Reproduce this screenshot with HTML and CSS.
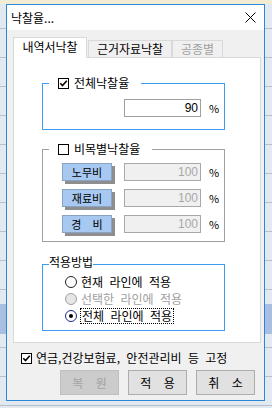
FILE: index.html
```html
<!DOCTYPE html>
<html lang="ko">
<head>
    <meta charset="UTF-8">
    <meta name="viewport" content="width=device-width, initial-scale=1.0">
    <title>낙찰율</title>
    <link rel="stylesheet" href="styles.css">
</head>
<body>
    <div class="dialog">
        <div class="titlebar">
            <span class="title">낙찰율...</span>
            <svg class="close-icon" width="11" height="11" viewBox="0 0 11 11">
                <path d="M0.5 0.5L10.5 10.5M10.5 0.5L0.5 10.5" stroke="#000" stroke-width="1" fill="none"/>
            </svg>
        </div>

        <div class="dialog-body">
            <div class="tabs">
                <div class="tab tab-active">내역서낙찰</div>
                <div class="tab tab-second">근거자료낙찰</div>
                <div class="tab tab-disabled">공종별</div>
            </div>

            <div class="tab-panel">
                <fieldset class="group group-blue">
                    <legend class="check-legend">
                        <span class="check-label">
                            <span class="checkbox">
                                <svg width="9" height="9" viewBox="0 0 9 9"><path d="M1.3 4.2L3.5 6.6L7.8 1.8" stroke="#000" stroke-width="1.6" fill="none"/></svg>
                            </span>전체낙찰율
                        </span>
                    </legend>
                    <div class="group-content total-content">
                        <span class="field field-edit">90</span>
                        <span class="unit">%</span>
                    </div>
                </fieldset>

                <fieldset class="group group-gray">
                    <legend class="check-legend">
                        <span class="check-label">
                            <span class="checkbox"></span>비목별낙찰율
                        </span>
                    </legend>
                    <div class="group-content item-content">
                        <div class="item-row">
                            <span class="item-button">노무비</span>
                            <span class="field field-disabled">100</span>
                            <span class="unit">%</span>
                        </div>
                        <div class="item-row">
                            <span class="item-button">재료비</span>
                            <span class="field field-disabled">100</span>
                            <span class="unit">%</span>
                        </div>
                        <div class="item-row">
                            <span class="item-button item-button-wide">경 비</span>
                            <span class="field field-disabled">100</span>
                            <span class="unit">%</span>
                        </div>
                    </div>
                </fieldset>

                <fieldset class="group group-blue group-method">
                    <legend class="text-legend">적용방법</legend>
                    <div class="group-content method-content">
                        <div class="radio-row">
                            <span class="radio"></span>
                            <span class="radio-text">현재 라인에 적용</span>
                        </div>
                        <div class="radio-row radio-row-disabled">
                            <span class="radio radio-disabled"></span>
                            <span class="radio-text">선택한 라인에 적용</span>
                        </div>
                        <div class="radio-row">
                            <span class="radio radio-checked"></span>
                            <span class="radio-text radio-focus">전체 라인에 적용</span>
                        </div>
                    </div>
                </fieldset>
            </div>

            <div class="fixed-row">
                <span class="checkbox">
                    <svg width="9" height="9" viewBox="0 0 9 9"><path d="M1.3 4.2L3.5 6.6L7.8 1.8" stroke="#000" stroke-width="1.6" fill="none"/></svg>
                </span>
                <span class="fixed-text">연금,건강보험료, 안전관리비 등 고정</span>
            </div>

            <div class="dialog-buttons">
                <button class="dlg-button" disabled>복 원</button>
                <button class="dlg-button">적 용</button>
                <button class="dlg-button">취 소</button>
            </div>
        </div>
    </div>
</body>
</html>
```

FILE: styles.css
```css
body {
    margin: 0;
    height: 408px;
    overflow: hidden;
    font-family: "Noto Sans CJK KR", "Noto Sans", sans-serif;
    font-size: 12px;
    line-height: 14px;
    color: #000;
    background-color: #e3e9f0;
    background-image:
        linear-gradient(to bottom, #f2ecd2 0, #f2ecd2 4px, transparent 4px),
        linear-gradient(to bottom, transparent 304px, #a9bfe2 304px, #a9bfe2 334px, transparent 334px),
        repeating-linear-gradient(to bottom, transparent 0, transparent 28px, #b8c0ca 28px, #b8c0ca 29px);
}

.dialog {
    box-sizing: border-box;
    width: 259px;
    height: 397px;
    margin: 4px 0 0 6px;
    border: 1px solid #2b87d6;
    background: #f0f0f0;
    display: flex;
    flex-direction: column;
}

/* title bar */
.titlebar {
    height: 25px;
    flex: none;
    background: #fff;
    display: flex;
    align-items: center;
    justify-content: space-between;
    padding: 0 8px 0 4px;
}

.close-icon {
    display: block;
}

.dialog-body {
    padding: 7px 3px 5px 6px;
    display: flex;
    flex-direction: column;
}

/* tabs */
.tabs {
    height: 20px;
    display: flex;
    align-items: flex-end;
}

.tab {
    box-sizing: border-box;
    height: 17px;
    padding-top: 1px;
    border: 1px solid #d9d9d9;
    border-bottom: none;
    background: #f0f0f0;
    text-align: center;
    white-space: nowrap;
}

.tab-active {
    width: 74px;
    height: 21px;
    margin-bottom: -1px;
    padding-top: 2px;
    background: #fff;
    position: relative;
    z-index: 1;
}

.tab-second {
    width: 84px;
    margin-left: 1px;
}

.tab-disabled {
    width: 51px;
    color: #a0a0a0;
}

.tab-panel {
    box-sizing: border-box;
    width: 248px;
    height: 286px;
    border: 1px solid #d9d9d9;
    background: #fff;
    padding: 18px 0 0 28px;
    display: flex;
    flex-direction: column;
}

/* group boxes */
.group {
    box-sizing: border-box;
    width: 183px;
    min-width: 0;
    margin: 0;
    padding: 0;
    border: 1px solid #a0a0a0;
}

.group-blue {
    border-color: #3c9cf2;
}

.group-gray {
    margin-top: 12px;
}

.group-method {
    margin-top: 13px;
}

.check-legend {
    margin-left: 6px;
    padding: 0 12px 0 9px;
    line-height: 14px;
}

.text-legend {
    margin-left: 6px;
    padding: 0 0 4px 0;
    line-height: 14px;
}

.check-label {
    display: flex;
    align-items: center;
    gap: 5px;
}

.checkbox {
    box-sizing: border-box;
    width: 11px;
    height: 11px;
    flex: none;
    border: 1px solid #000;
    background: #fff;
    display: inline-flex;
    align-items: center;
    justify-content: center;
}

.checkbox svg {
    display: block;
}

.total-content {
    padding: 9px 0 12px 81px;
    display: flex;
    align-items: center;
}

.field {
    box-sizing: border-box;
    width: 77px;
    height: 18px;
    padding-right: 2px;
    text-align: right;
    line-height: 16px;
    font-family: "Liberation Sans", sans-serif;
    font-size: 12px;
}

.field-edit {
    border: 1px solid #a0a0a0;
    background: #fff;
}

.field-disabled {
    border: 1px solid #a8a8a8;
    background: #f0f0f0;
    color: #a8a8a8;
}

.unit {
    margin-left: 8px;
    font-size: 11px;
}

.item-content {
    padding: 7px 0 8px 19px;
    display: flex;
    flex-direction: column;
    gap: 8px;
}

.item-row {
    display: flex;
    align-items: center;
}

.item-button {
    box-sizing: border-box;
    width: 50px;
    height: 18px;
    margin-right: 12px;
    border: 1px solid #8aa2c4;
    background: #a7c9f1;
    box-shadow: 3px 3px 0 #8e8e8e;
    text-align: center;
    font-size: 11px;
    line-height: 16px;
}

.item-button-wide {
    word-spacing: 8px;
}

/* radio group */
.method-content {
    padding: 0 0 6px 22px;
}

.radio-row {
    height: 17px;
    display: flex;
    align-items: center;
    gap: 4px;
    word-spacing: 3px;
}

.radio-row-disabled {
    color: #a0a0a0;
}

.radio {
    box-sizing: border-box;
    width: 12px;
    height: 12px;
    flex: none;
    border: 1px solid #222;
    border-radius: 50%;
    background: #fff;
    display: inline-flex;
    align-items: center;
    justify-content: center;
}

.radio-disabled {
    border-color: #a0a0a0;
    background: #e6e6e6;
}

.radio-checked {
    border-color: #1c2a80;
}

.radio-checked::after {
    content: "";
    width: 4px;
    height: 4px;
    border-radius: 50%;
    background: #000;
}

.radio-focus {
    outline: 1px dotted #000;
    padding: 0 1px;
}

/* bottom */
.fixed-row {
    height: 16px;
    margin-top: 7px;
    padding-left: 8px;
    display: flex;
    align-items: center;
    gap: 4px;
    word-spacing: 3px;
}

.dialog-buttons {
    margin-top: 4px;
    padding-right: 6px;
    display: flex;
    justify-content: flex-end;
    gap: 9px;
}

.dlg-button {
    box-sizing: border-box;
    width: 59px;
    height: 25px;
    margin: 0;
    padding: 0;
    border: 1px solid #adadad;
    background: #e1e1e1;
    font-family: "Noto Sans CJK KR", "Noto Sans", sans-serif;
    font-size: 12px;
    color: #000;
    word-spacing: 9px;
}

.dlg-button:disabled {
    border-color: #bfbfbf;
    background: #cccccc;
    color: #a3a3a3;
}
```
